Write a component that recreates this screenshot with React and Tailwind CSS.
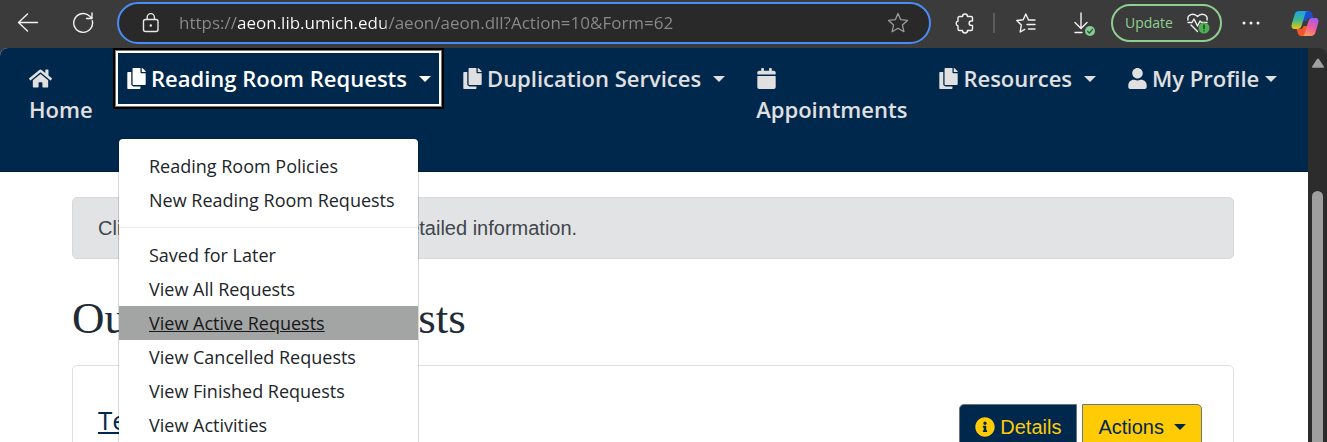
import { FaCalendar, FaCopy, FaHome, FaInfoCircle, FaUser } from "react-icons/fa";

const menuGroups = [
  ["Reading Room Policies", "New Reading Room Requests"],
  [
    "Saved for Later",
    "View All Requests",
    "View Active Requests",
    "View Cancelled Requests",
    "View Finished Requests",
    "View Activities",
  ],
];

export default function App() {
  return (
    <div className="flex h-screen flex-col overflow-hidden bg-[#3b3b3b]">
      <Toolbar />
      <div className="flex min-h-0 flex-1">
        <div className="min-w-0 flex-1 overflow-hidden rounded-tl-lg bg-white">
          <NavBar />
          <Requests />
        </div>
        <Scrollbar />
      </div>
    </div>
  );
}

function Toolbar() {
  return (
    <header className="flex h-12 shrink-0 items-center pr-2 pb-0.5 pl-4 font-['Open_Sans',sans-serif]">
      <button aria-label="Back" className="mr-8">
        <BackIcon />
      </button>
      <button aria-label="Refresh" className="mr-[23px]">
        <RefreshIcon />
      </button>

      <div className="flex h-[42px] flex-1 items-center rounded-full border-2 border-[#4a8df8] bg-[#292929] px-5">
        <LockIcon />
        <input
          type="text"
          aria-label="Address"
          defaultValue="https://aeon.lib.umich.edu/aeon/aeon.dll?Action=10&Form=62"
          className="ml-4 min-w-0 flex-1 bg-[linear-gradient(90deg,#8b8b8b_58px,#ffffff_58px,#ffffff_207px,#8b8b8b_207px)] bg-clip-text text-[17px] text-transparent outline-none"
        />
        <button aria-label="Add to favorites">
          <StarIcon />
        </button>
      </div>

      <button aria-label="Extensions" className="ml-[23px]">
        <PuzzleIcon />
      </button>
      <span className="ml-[17px] h-5 w-0.5 bg-[#5c5c5c]" />
      <button aria-label="Favorites" className="ml-5">
        <FavoritesIcon />
      </button>
      <button aria-label="Downloads" className="ml-[35px]">
        <DownloadIcon />
      </button>
      <button className="ml-[15px] flex h-[38px] w-[111px] items-center justify-between rounded-full border-2 border-[#8fcf91] pr-2.5 pl-3 text-sm text-[#8fcf91]">
        Update
        <HealthIcon />
      </button>
      <button aria-label="Settings and more" className="ml-5">
        <DotsIcon />
      </button>
      <button aria-label="Copilot" className="ml-[31px]">
        <CopilotIcon />
      </button>
    </header>
  );
}

function NavBar() {
  return (
    <nav className="border-b border-[#001c3a] bg-[#00274c] pt-[3px] pb-[34px] pl-[19px] font-['Open_Sans',sans-serif] text-[22px] leading-[31px] font-semibold text-[#e0e0e0]">
      <ul className="flex items-start gap-[11px]">
        <li className="w-[86px]">
          <NavLink icon={<FaHome size={23} />} label="Home" stacked />
        </li>
        <li className="relative">
          <NavLink icon={<FaCopy size={21} />} label="Reading Room Requests" caret active />
          <RequestsMenu />
        </li>
        <li>
          <NavLink icon={<FaCopy size={21} />} label="Duplication Services" caret />
        </li>
        <li>
          <NavLink icon={<FaCalendar size={21} />} label="Appointments" stacked />
        </li>
        <li>
          <NavLink icon={<FaCopy size={21} />} label="Resources" caret />
        </li>
        <li>
          <NavLink icon={<FaUser size={21} />} label="My Profile" caret tight />
        </li>
      </ul>
    </nav>
  );
}

function NavLink({ icon, label, caret, active, stacked, tight }) {
  const look = active
    ? "border-white text-white shadow-[0_0_0_1px_#777777,0_0_0_3px_#000000]"
    : "border-transparent";

  return (
    <a
      href="#"
      className={`flex border-2 px-2 py-2.5 whitespace-nowrap ${look} ${stacked ? "flex-col" : "items-center"}`}
    >
      <span className="flex h-[31px] items-center">{icon}</span>
      <span className={stacked ? "" : "ml-1"}>{label}</span>
      {caret && <Caret className={tight ? "ml-1.5" : "ml-3"} />}
    </a>
  );
}

function Caret({ className = "" }) {
  return (
    <svg className={className} width="12" height="6" viewBox="0 0 12 6" fill="currentColor" aria-hidden="true">
      <path d="M0 0h12L6 6z" />
    </svg>
  );
}

function RequestsMenu() {
  return (
    <div className="absolute top-full left-0.5 z-10 mt-8 w-[301px] rounded-[5px] border border-black/15 bg-white bg-clip-padding py-2.5 text-lg leading-[34px] font-normal whitespace-nowrap text-[#212529]">
      {menuGroups.map((group, i) => (
        <ul key={group[0]} className={i > 0 ? "mt-2.5 border-t border-[#e9ecef] pt-2.5" : ""}>
          {group.map((item) => (
            <li key={item}>
              <a
                href="#"
                className={`block px-[30px] ${item === "View Active Requests" ? "bg-[#a3a5a4] text-[#16181b] underline" : ""}`}
              >
                {item}
              </a>
            </li>
          ))}
        </ul>
      ))}
    </div>
  );
}

function Requests() {
  return (
    <main className="mr-[74px] ml-[72px] pt-[25px] font-['Liberation_Sans',Arial,sans-serif] text-xl">
      <div className="rounded-[5px] border border-[#d6d8db] bg-[#e2e3e5] px-[25px] py-[15px] leading-[30px] text-[#41464b]">
        Click on the request title for more detailed information.
      </div>

      <h1 className="mt-8 font-['Liberation_Serif',serif] text-[45px] leading-[54px] text-[#212b36]">
        Outstanding Requests
      </h1>

      <section className="mt-5 flex items-start justify-between rounded-[5px] border border-[#dfdfdf] pt-[38px] pr-[31px] pb-6 pl-[25px]">
        <a
          href="#"
          className="font-['Open_Sans',sans-serif] text-[26px] leading-8 text-[#00274c] underline decoration-2 underline-offset-2"
        >
          Test Request
        </a>
        <div className="flex gap-[5px]">
          <button className="flex h-[46px] items-center gap-[5px] rounded-l-[5px] border border-[#6c757d] bg-[#00274c] px-[15px] text-[#ffcb05]">
            <FaInfoCircle />
            Details
          </button>
          <button className="flex h-[46px] items-center gap-2.5 rounded-r-[5px] border border-[#6c757d] bg-[#ffcb05] px-[15px] text-[#00274c]">
            Actions
            <Caret />
          </button>
        </div>
      </section>
    </main>
  );
}

function Scrollbar() {
  return (
    <div className="flex w-[19px] shrink-0 flex-col items-center rounded-tr-lg bg-[#2c2c2c] pt-2.5">
      <svg width="12" height="10" viewBox="0 0 12 10" fill="#a0a0a0" aria-hidden="true">
        <path d="M6 .5c.5 0 .8.2 1.1.7l4.6 7c.5.8.1 1.6-.8 1.6H1.1c-.9 0-1.3-.8-.8-1.6l4.6-7c.3-.5.6-.7 1.1-.7z" />
      </svg>
      <div className="mt-[123px] w-[11px] flex-1 rounded-t-full bg-[#9f9f9f]" />
    </div>
  );
}

function BackIcon() {
  return (
    <svg width="24" height="24" viewBox="0 0 24 24" fill="none" stroke="#f2f2f2" strokeWidth="1.4" strokeLinecap="round" strokeLinejoin="round">
      <path d="M21.5 11.5H2.5M11.5 3 2.5 11.5l9 8.5" />
    </svg>
  );
}

function RefreshIcon() {
  return (
    <svg width="22" height="24" viewBox="0 0 22 24" fill="none" stroke="#f2f2f2" strokeWidth="1.4" strokeLinecap="round" strokeLinejoin="round">
      <path d="M20.3 9.8A9.4 9.4 0 1 1 17.5 5l2.5 2.5M20 2v5.5h-5.5" />
    </svg>
  );
}

function LockIcon() {
  return (
    <svg width="24" height="24" viewBox="0 0 24 24" fill="none" stroke="#e8e8e8" strokeWidth="1.4" className="shrink-0">
      <rect x="4.5" y="8.5" width="14.5" height="12" rx="2" />
      <path d="M8.2 8.5V6.2a3.6 3.6 0 0 1 7.2 0v2.3" />
      <circle cx="11.8" cy="14.5" r="1.2" fill="#e8e8e8" stroke="none" />
    </svg>
  );
}

function StarIcon() {
  return (
    <svg width="22" height="22" viewBox="0 0 22 22" fill="none" stroke="#9a9a9a" strokeWidth="1.3" strokeLinejoin="round">
      <path d="m11 1.5 2.7 6.2 6.8.7-5.1 4.5 1.5 6.8-5.9-3.5-5.9 3.5 1.5-6.8L1.5 8.4l6.800-.7z" />
    </svg>
  );
}

function PuzzleIcon() {
  return (
    <svg width="22" height="22" viewBox="0 0 22 22" fill="none" stroke="#f2f2f2" strokeWidth="1.4" strokeLinejoin="round">
      <path d="M5.500 4.500h3a2.500 2.500 0 0 1 5 0H17a1.500 1.500 0 0 1 1.500 1.500v3h-1.200a2.200 2.200 0 0 0 0 4.400h1.200v3.600a1.500 1.500 0 0 1-1.500 1.500h-3.500a2.500 2.500 0 0 1-5 0h-3A1.500 1.500 0 0 1 4 17v-3.200a2.500 2.500 0 0 1 0-4.800V6a1.500 1.500 0 0 1 1.500-1.500z" />
    </svg>
  );
}

function FavoritesIcon() {
  return (
    <svg width="22" height="22" viewBox="0 0 22 22" fill="none" stroke="#f2f2f2" strokeWidth="1.4" strokeLinecap="round" strokeLinejoin="round">
      <path d="M13.5 8 10.8 2 8.2 7.7 1.8 8.5l4.5 4.6L5.2 20l4.5-2.6M13.5 8H20M12 12.500h8M13.500 17H20" />
    </svg>
  );
}

function DownloadIcon() {
  return (
    <svg width="24" height="26" viewBox="0 0 24 26" fill="none" stroke="#f2f2f2" strokeWidth="1.4" strokeLinecap="round" strokeLinejoin="round">
      <path d="M9 3v15M3 12.5l6 6 6-6M3 22.5h7" />
      <circle cx="18" cy="21" r="5" fill="#84cb96" stroke="none" />
      <path d="m15.5 21.200 1.800 1.800 3.300-3.600" stroke="#2b4a33" strokeWidth="1.2" />
    </svg>
  );
}

function HealthIcon() {
  return (
    <svg width="24" height="24" viewBox="0 0 24 24" fill="none" stroke="#f2f2f2" strokeWidth="1.4" strokeLinecap="round" strokeLinejoin="round">
      <path d="M2 9C.8 4 7.500 1 11.500 5.500c4-4.500 10.700-1.500 9.500 3.500M5 14l6.500 6.500M2 11.500h4l2-3.500 3.500 7 2.500-5 1.500 1.500H21" />
      <circle cx="18" cy="17" r="5.5" fill="#4fad53" stroke="none" />
      <path d="M18 14v3.500M18 19.800v.1" stroke="#173d1a" />
    </svg>
  );
}

function DotsIcon() {
  return (
    <svg width="18" height="4" viewBox="0 0 18 4" fill="#f2f2f2">
      <circle cx="2" cy="2" r="1.5" />
      <circle cx="9" cy="2" r="1.5" />
      <circle cx="16" cy="2" r="1.5" />
    </svg>
  );
}

function CopilotIcon() {
  return (
    <svg width="28" height="27" viewBox="0 0 28 27">
      <defs>
        <linearGradient id="copilot-left" x1="0" y1="0" x2="0" y2="1">
          <stop offset="0" stopColor="#1a9fe8" />
          <stop offset="0.5" stopColor="#3dba8c" />
          <stop offset="1" stopColor="#f2c511" />
        </linearGradient>
        <linearGradient id="copilot-right" x1="0.7" y1="0" x2="0.3" y2="1">
          <stop offset="0" stopColor="#a45cf0" />
          <stop offset="0.5" stopColor="#ee5c9c" />
          <stop offset="1" stopColor="#ff9a57" />
        </linearGradient>
      </defs>
      <path d="M13 1h5c1.800 0 2.600 1 3.100 2.700L22.500 8H19c-2 0-3 1-3.600 3L11 11z" fill="#1c4fd0" />
      <path d="M15 26h-5c-1.800 0-2.600-1-3.100-2.700L5.500 19H9c2 0 3-1 3.600-3H17z" fill="#f0562d" />
      <path d="M8 1h9c-1.500 0-2.300 1-2.800 2.700L10.800 15c-.8 2.700-1.800 4-4.300 4H4c-3 0-4-2-3.200-5L3.600 4.500C4.300 2.200 5.500 1 8 1z" fill="url(#copilot-left)" />
      <path d="M20 26h-9c1.500 0 2.300-1 2.800-2.700L17.200 12c.8-2.700 1.800-4 4.300-4H24c3 0 4 2 3.200 5l-2.800 9.500C23.700 24.800 22.500 26 20 26z" fill="url(#copilot-right)" />
    </svg>
  );
}
